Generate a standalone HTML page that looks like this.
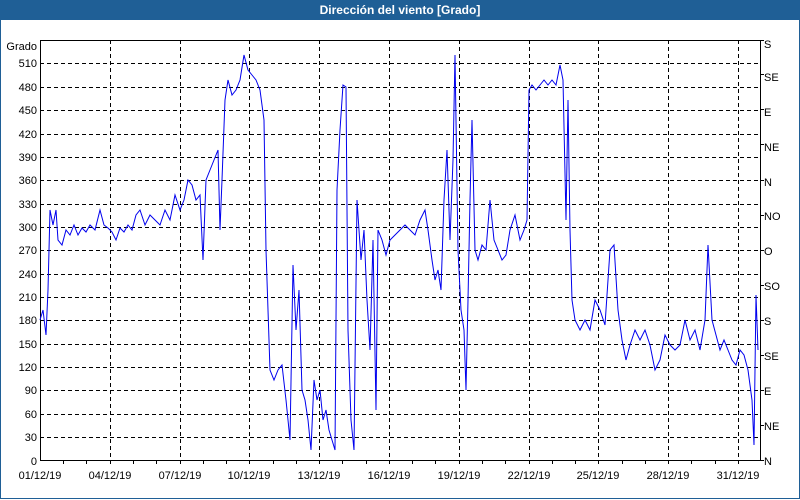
<!DOCTYPE html>
<html><head><meta charset="utf-8"><style>
html,body{margin:0;padding:0;background:#fff}
#w{position:relative;width:798px;height:498px;border:1px solid #1f5f96;border-top:none;background:#fff;overflow:hidden}
#t{height:20px;background:#1f5f96;color:#fff;font:bold 12px "Liberation Sans",sans-serif;text-align:center;line-height:20px}
svg{position:absolute;left:-1px;top:0}
text{font-family:"Liberation Sans",sans-serif;font-size:11px;fill:#000}
</style></head><body>
<div id="w"><div id="t">Dirección del viento [Grado]</div>
<svg width="800" height="500" viewBox="0 0 800 500">
<g stroke="#000" stroke-width="1" stroke-dasharray="4,3" fill="none" shape-rendering="crispEdges">
<path d="M40 437.5H760M40 414.5H760M40 390.5H760M40 367.5H760M40 344.5H760M40 320.5H760M40 297.5H760M40 274.5H760M40 250.5H760M40 227.5H760M40 204.5H760M40 180.5H760M40 157.5H760M40 134.5H760M40 110.5H760M40 87.5H760M40 63.5H760"/>
<path d="M110.5 40V460M180.5 40V460M249.5 40V460M319.5 40V460M389.5 40V460M459.5 40V460M529.5 40V460M598.5 40V460M668.5 40V460M738.5 40V460"/>
</g>
<g stroke="#000" fill="none" shape-rendering="crispEdges">
<path d="M40.5 40V461M760.5 40V461M40 40.5H761M40 460.5H761"/>
<path d="M63.5 460v4M86.5 460v4M110.5 460v4M133.5 460v4M156.5 460v4M180.5 460v4M203.5 460v4M226.5 460v4M249.5 460v4M273.5 460v4M296.5 460v4M319.5 460v4M342.5 460v4M366.5 460v4M389.5 460v4M412.5 460v4M435.5 460v4M459.5 460v4M482.5 460v4M505.5 460v4M529.5 460v4M552.5 460v4M575.5 460v4M598.5 460v4M622.5 460v4M645.5 460v4M668.5 460v4M691.5 460v4M715.5 460v4M738.5 460v4"/>
<path d="M760 40.5h4M760 74.5h4M760 109.5h4M760 144.5h4M760 180.5h4M760 215.5h4M760 250.5h4M760 285.5h4M760 320.5h4M760 355.5h4M760 390.5h4M760 425.5h4M760 460.5h4"/>
</g>
<polyline fill="none" stroke="#0000ee" stroke-width="1" points="40,320 43,310 46,335 48,290 50,210 53,225 56,210 58,240 62,245 66,230 70,235 74,225 78,235 82,228 86,232 90,225 95,230 100,210 104,225 108,228 112,232 116,240 120,228 124,232 128,225 132,230 136,215 140,210 145,225 150,215 155,220 160,225 165,210 170,220 175,195 180,210 184,200 188,180 192,185 196,200 200,195 203,260 206,180 210,170 214,160 218,150 220,230 222,180 225,100 228,80 232,95 236,90 240,80 244,55 248,70 252,75 256,80 260,90 264,120 266,250 270,370 274,380 278,370 282,365 286,400 290,440 293,265 296,330 299,290 302,390 305,400 308,420 311,450 314,380 317,400 320,390 323,420 326,410 329,430 332,440 335,450 337,190 340,130 343,85 346,87 348,330 351,420 354,450 357,200 361,260 364,230 367,300 370,350 373,240 376,410 378,230 382,240 386,255 390,240 395,235 400,230 405,225 410,230 415,235 420,220 425,210 428,230 432,260 435,280 438,270 441,290 444,200 447,150 450,240 453,160 455,55 458,250 461,310 464,330 466,390 468,300 470,200 472,120 475,250 478,260 482,245 486,250 490,200 494,240 498,250 502,260 506,255 510,230 515,215 520,240 524,230 527,220 529,90 532,85 536,90 540,85 544,80 548,85 552,80 556,85 560,65 563,80 566,220 568,100 570,230 572,300 575,320 580,330 585,320 590,330 595,300 600,310 605,325 610,250 614,245 618,310 622,340 626,360 630,345 635,330 640,340 645,330 650,345 655,370 660,360 665,335 670,345 675,350 680,345 685,320 690,340 695,330 700,350 705,320 708,245 712,320 716,335 720,350 724,340 728,350 732,360 736,365 740,350 744,355 748,370 752,400 754,445 756,295 758,350"/>
<g text-anchor="end">
<text x="37" y="50">Grado</text>
<text x="37" y="67">510</text><text x="37" y="91">480</text><text x="37" y="114">450</text><text x="37" y="138">420</text><text x="37" y="161">390</text><text x="37" y="184">360</text><text x="37" y="208">330</text><text x="37" y="231">300</text><text x="37" y="254">270</text><text x="37" y="278">240</text><text x="37" y="301">210</text><text x="37" y="324">180</text><text x="37" y="348">150</text><text x="37" y="371">120</text><text x="37" y="394">90</text><text x="37" y="418">60</text><text x="37" y="441">30</text><text x="37" y="465">0</text>
</g>
<g>
<text x="764" y="48">S</text><text x="764" y="81">SE</text><text x="764" y="116">E</text><text x="764" y="151">NE</text><text x="764" y="186">N</text><text x="764" y="220">NO</text><text x="764" y="255">O</text><text x="764" y="290">SO</text><text x="764" y="325">S</text><text x="764" y="360">SE</text><text x="764" y="395">E</text><text x="764" y="430">NE</text><text x="764" y="465">N</text>
</g>
<g text-anchor="middle">
<text x="40" y="479">01/12/19</text><text x="110" y="479">04/12/19</text><text x="180" y="479">07/12/19</text><text x="249" y="479">10/12/19</text><text x="319" y="479">13/12/19</text><text x="389" y="479">16/12/19</text><text x="459" y="479">19/12/19</text><text x="529" y="479">22/12/19</text><text x="598" y="479">25/12/19</text><text x="668" y="479">28/12/19</text><text x="738" y="479">31/12/19</text>
</g>
</svg></div>
</body></html>
